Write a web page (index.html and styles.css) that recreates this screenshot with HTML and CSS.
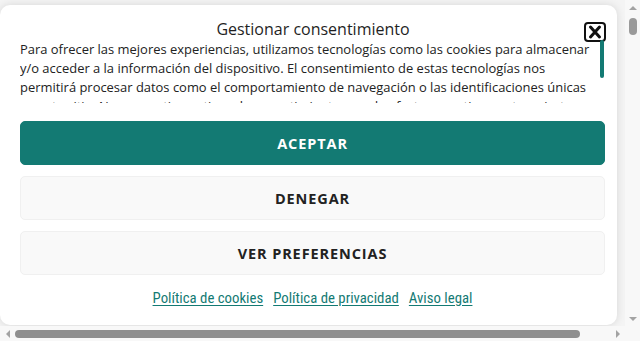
FILE: index.html
```html
<!DOCTYPE html>
<html lang="es">
<head>
<meta charset="utf-8">
<title>Gestionar consentimiento</title>
<link rel="stylesheet" href="styles.css">
</head>
<body>
<div class="viewport">
  <div class="modal">
    <div class="header">
      <div class="spacer"></div>
      <div class="title">Gestionar consentimiento</div>
      <button class="close" aria-label="Cerrar">
        <svg width="22" height="20" viewBox="0 0 22 20">
          <rect x="1" y="1" width="20" height="18" rx="3" ry="3" fill="none" stroke="#111" stroke-width="2"/>
          <path d="M6.5 5 L15.5 15 M15.5 5 L6.5 15" stroke="#111" stroke-width="3" stroke-linecap="round"/>
        </svg>
      </button>
    </div>
    <div class="message">
      <div class="msg-text">Para ofrecer las mejores experiencias, utilizamos tecnologías como las cookies para almacenar<br>y/o acceder a la información del dispositivo. El consentimiento de estas tecnologías nos<br>permitirá procesar datos como el comportamiento de navegación o las identificaciones únicas<br>en este sitio. No consentir o retirar el consentimiento, puede afectar negativamente a ciertas<br>características y funciones.</div>
      <div class="msg-bar"><div class="msg-thumb"></div></div>
    </div>
    <div class="buttons">
      <button class="btn accept">ACEPTAR</button>
      <button class="btn plain">DENEGAR</button>
      <button class="btn plain">VER PREFERENCIAS</button>
    </div>
    <div class="links">
      <a href="#">Política de cookies</a>
      <a href="#">Política de privacidad</a>
      <a href="#">Aviso legal</a>
    </div>
  </div>
</div>
<div class="vscroll">
  <div class="arrow"><span class="tri up"></span></div>
  <div class="vtrack"><div class="vthumb"></div></div>
  <div class="arrow"><span class="tri down"></span></div>
</div>
<div class="hscroll">
  <div class="arrow"><span class="tri left"></span></div>
  <div class="htrack"><div class="hthumb"></div></div>
  <div class="arrow"><span class="tri right"></span></div>
</div>
<div class="corner"></div>
</body>
</html>
```

FILE: styles.css
```css
html, body {
  margin: 0;
  padding: 0;
}
body {
  width: 640px;
  height: 341px;
  overflow: hidden;
  display: grid;
  grid-template-columns: 625px 15px;
  grid-template-rows: 326px 15px;
  background: #f8f8f8;
  font-family: "Open Sans", "Noto Sans", sans-serif;
}
.viewport {
  background: #f4f4f4;
  overflow: hidden;
  padding-top: 5px;
  box-sizing: border-box;
}
.modal {
  width: 617px;
  height: 320px;
  box-sizing: border-box;
  background: #fff;
  border-radius: 10px;
  box-shadow: 0 0 8px rgba(0, 0, 0, 0.12);
  padding: 14px 12px 0 20px;
  display: flex;
  flex-direction: column;
}
.header {
  display: grid;
  grid-template-columns: 1fr auto 1fr;
  align-items: start;
  height: 21px;
  margin-right: -1px;
}
.title {
  font-size: 16px;
  font-weight: 500;
  color: #1f1f1f;
  line-height: 21px;
}
.close {
  justify-self: end;
  border: 0;
  background: none;
  padding: 0;
  margin-top: 3px;
  width: 22px;
  height: 20px;
  display: block;
  cursor: pointer;
}
.close svg {
  display: block;
}
.message {
  height: 63px;
  display: flex;
  gap: 3px;
}
.msg-text {
  flex: 1;
  overflow: hidden;
  white-space: nowrap;
  font-size: 12.95px;
  line-height: 19px;
  color: #222;
}
.msg-bar {
  width: 4px;
  flex: none;
  margin-right: 1px;
}
.msg-thumb {
  height: 38px;
  border-radius: 2px;
  background: #137a73;
}
.buttons {
  display: flex;
  flex-direction: column;
  gap: 11px;
  margin-top: 18px;
}
.btn {
  height: 44px;
  border-radius: 5px;
  font-family: "Open Sans", "Noto Sans", sans-serif;
  font-size: 14.5px;
  font-weight: 700;
  letter-spacing: 0.9px;
  cursor: pointer;
}
.accept {
  background: #137a73;
  border: 1px solid #137a73;
  color: #fff;
}
.plain {
  background: #f9f9f9;
  border: 1px solid #f0f0f0;
  color: #222;
}
.links {
  display: flex;
  justify-content: center;
  gap: 10px;
  margin-top: 14px;
  margin-left: 0;
}
.links a {
  font-family: "Roboto Condensed", "Liberation Sans Narrow", "DejaVu Sans Condensed", "Roboto", sans-serif;
  font-stretch: condensed;
  font-size: 14.8px;
  color: #137a73;
  text-decoration: underline;
  text-underline-offset: 2px;
}

/* scrollbars */
.vscroll {
  display: flex;
  flex-direction: column;
  background: #f8f8f8;
}
.hscroll {
  display: flex;
  background: #f8f8f8;
}
.corner {
  background: #f8f8f8;
}
.arrow {
  width: 15px;
  height: 15px;
  flex: none;
  display: flex;
  align-items: center;
  justify-content: center;
}
.tri {
  width: 0;
  height: 0;
  display: block;
}
.tri.up {
  border-left: 4px solid transparent;
  border-right: 4px solid transparent;
  border-bottom: 4px solid #a3a3a3;
}
.tri.down {
  border-left: 4px solid transparent;
  border-right: 4px solid transparent;
  border-top: 4px solid #a3a3a3;
}
.tri.left {
  border-top: 4px solid transparent;
  border-bottom: 4px solid transparent;
  border-right: 4px solid #a3a3a3;
}
.tri.right {
  border-top: 4px solid transparent;
  border-bottom: 4px solid transparent;
  border-left: 4px solid #a3a3a3;
}
.vtrack {
  flex: 1;
  display: flex;
  justify-content: center;
  padding-top: 3px;
}
.vthumb {
  width: 8px;
  height: 17px;
  border-radius: 4px;
  background: #9a9a9a;
}
.htrack {
  flex: 1;
  display: flex;
  align-items: center;
}
.hthumb {
  width: 565px;
  height: 8px;
  border-radius: 4px;
  background: #8f8f8f;
}
```
